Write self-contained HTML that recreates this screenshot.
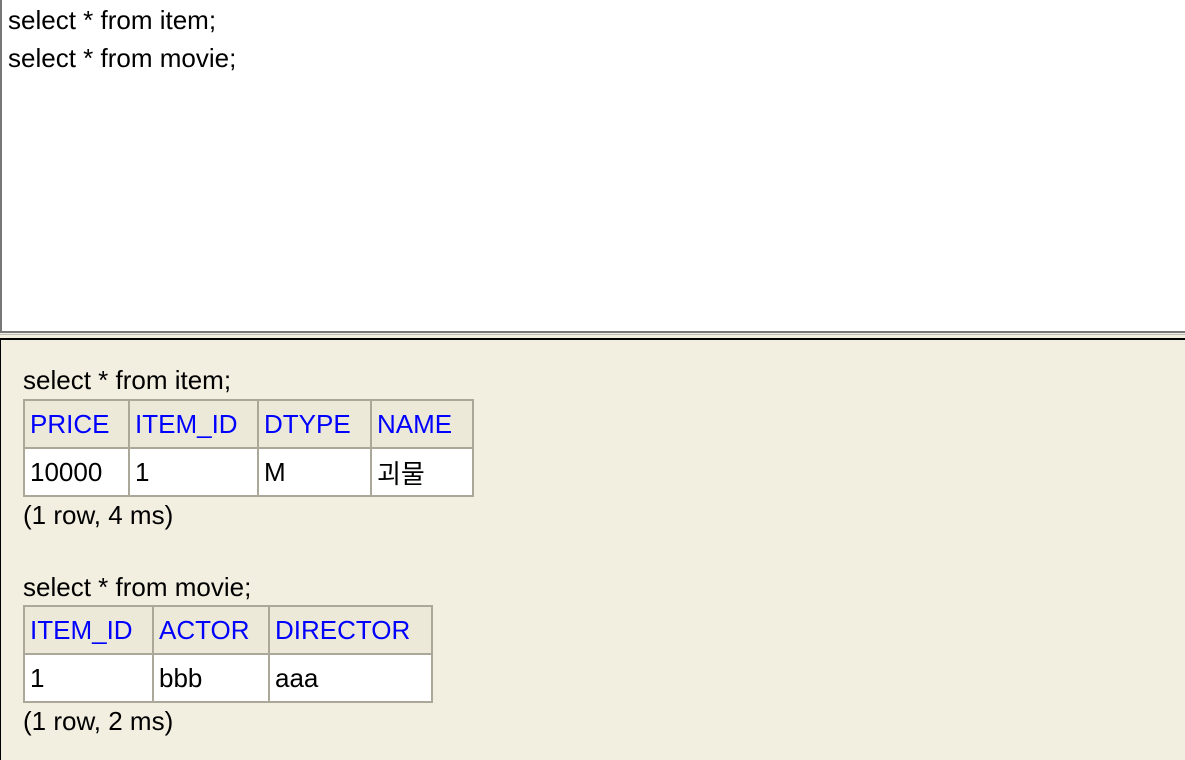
<!DOCTYPE html>
<html><head><meta charset="utf-8"><style>
body{margin:0;width:1185px;height:760px;overflow:hidden;background:#f2eee0;font-family:"Liberation Sans","Noto Sans CJK KR",sans-serif;position:relative}
#ta{position:absolute;left:0;top:0;width:1185px;height:331px;background:#fff;border-left:2px solid #777;box-sizing:border-box}
#ta div{position:absolute;left:6px;font-size:26px;line-height:38px;color:#000}
.l1{position:absolute;left:0;top:331px;width:1185px;height:2px;background:#777}
.l2{position:absolute;left:0;top:334px;width:1185px;height:1px;background:#bbb}
.l3{position:absolute;left:0;top:338px;width:1185px;height:2px;background:#000}
.lb{position:absolute;left:0;top:338px;width:1px;height:422px;background:#000}
.t{position:absolute;left:23px;font-size:26px;color:#000}
table{position:absolute;left:23px;border-collapse:collapse;font-size:26px;table-layout:fixed}
td,th{border:2px solid #aca899;height:43px;padding:0 0 0 5px;text-align:left;font-weight:normal;box-sizing:border-box;white-space:nowrap}
th{background:#ece9d8;color:#0000ff}
td{background:#fff}
</style></head><body>
<div id="ta"><div style="top:1px">select * from item;</div><div style="top:39px">select * from movie;</div></div>
<div class="l1"></div><div class="l2"></div><div class="l3"></div><div class="lb"></div>
<div class="t" style="top:365px">select * from item;</div>
<table style="top:399px;width:449px"><colgroup><col style="width:105px"><col style="width:129px"><col style="width:113px"><col style="width:102px"></colgroup>
<tr><th style="height:48px">PRICE</th><th>ITEM_ID</th><th>DTYPE</th><th>NAME</th></tr>
<tr><td style="height:48px">10000</td><td>1</td><td>M</td><td>괴물</td></tr></table>
<div class="t" style="top:500px">(1 row, 4 ms)</div>
<div class="t" style="top:572px">select * from movie;</div>
<table style="top:605px;width:408px"><colgroup><col style="width:129px"><col style="width:116px"><col style="width:163px"></colgroup>
<tr><th style="height:48px">ITEM_ID</th><th>ACTOR</th><th>DIRECTOR</th></tr>
<tr><td style="height:48px">1</td><td>bbb</td><td>aaa</td></tr></table>
<div class="t" style="top:706px">(1 row, 2 ms)</div>
</body></html>
